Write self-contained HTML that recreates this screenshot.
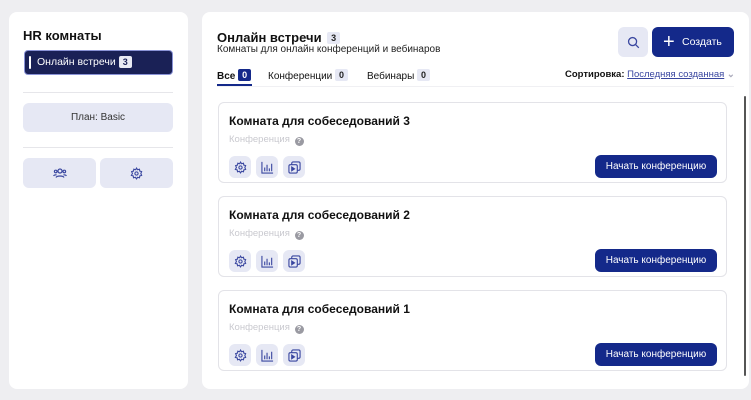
<!DOCTYPE html>
<html><head><meta charset="utf-8"><style>
*{box-sizing:border-box;margin:0;padding:0}
body{width:751px;height:400px;background:#eeeef1;font-family:"Liberation Sans",sans-serif;position:relative;overflow:hidden;color:#111}
.card{position:absolute;background:#fff;border-radius:8px}
.left{left:9px;top:12px;width:179px;height:377px}
.right{left:202px;top:12px;width:547px;height:377px}
.abs{position:absolute}
.sel{left:15px;top:38px;width:149px;height:25px;background:#1a2156;border:1.5px solid #8a93d6;border-radius:4px;color:#fff;font-size:10.5px;line-height:22px;padding-left:12px}
.sel:before{content:"";position:absolute;left:4px;top:5px;width:2px;height:13px;background:#fff;border-radius:1px}
.badgew{display:inline-block;background:#e8e9f3;color:#1a2156;font-size:9px;font-weight:bold;line-height:12px;padding:0 4px;border-radius:2px;margin-left:3px}
.hr{height:1px;background:#e6e6ea}
.lbtn{background:#e6e8f4;border-radius:6px;color:#333;font-size:10px;text-align:center}
.badge{display:inline-block;background:#e6e8f4;color:#222;font-size:9px;font-weight:bold;line-height:12px;padding:0 4px;border-radius:2px;margin-left:3px;vertical-align:1px}
.badged{background:#14298a;color:#fff}
.room{position:absolute;left:16px;width:509px;height:81px;border:1px solid #e3e3e8;border-radius:6px}
.room h3{position:absolute;left:10px;top:11px;font-size:12px;font-weight:bold}
.room .t{position:absolute;left:10px;top:31px;font-size:9.5px;color:#c9c9cf}
.q{display:inline-block;width:9px;height:9px;border-radius:50%;background:#9a9aa2;color:#fff;font-size:7px;line-height:9px;text-align:center;font-weight:bold;vertical-align:-1px;margin-left:2px}
.ib{position:absolute;top:53px;width:22px;height:22px;background:#e6e8f4;border-radius:6px;display:flex;align-items:center;justify-content:center}
.go{position:absolute;right:9px;top:52px;width:122px;height:23px;background:#14298a;border-radius:6px;color:#fff;font-size:10px;text-align:center;line-height:23px}
</style></head><body>
<div class="card left">
 <div class="abs" style="left:14px;top:16px;font-size:13px;font-weight:bold">HR комнаты</div>
 <div class="abs sel" style="left:15px;top:38px">Онлайн встречи<span class="badgew">3</span></div>
 <div class="abs hr" style="left:14px;top:80px;width:150px"></div>
 <div class="abs lbtn" style="left:14px;top:91px;width:150px;height:29px;line-height:29px">План: Basic</div>
 <div class="abs hr" style="left:14px;top:135px;width:150px"></div>
 <div class="abs lbtn" style="left:14px;top:146px;width:73px;height:30px;display:flex;align-items:center;justify-content:center">
  <svg width="14" height="12" viewBox="0 0 14 12" fill="none" stroke="#3a47a0" stroke-width="1.2"><circle cx="7" cy="4" r="2"/><circle cx="2.7" cy="4.5" r="1.3"/><circle cx="11.3" cy="4.5" r="1.3"/><path d="M3 10.5c1-2 7-2 8 0M0.6 9c.5-1 2-1.4 3-1M13.4 9c-.5-1-2-1.4-3-1"/></svg></div>
 <div class="abs lbtn" style="left:91px;top:146px;width:73px;height:30px;display:flex;align-items:center;justify-content:center">
  <svg width="13" height="13" viewBox="0 0 24 24" fill="none" stroke="#3a47a0" stroke-width="2"><circle cx="12" cy="12" r="3"/><path d="M12 2l2 3 3.5-1 .5 3.5 3.5 1-1.5 3.5 1.5 3.5-3.5 1-.5 3.5-3.5-1-2 3-2-3-3.5 1-.5-3.5-3.5-1L4.5 12 3 8.5l3.5-1L7 4l3.5 1z"/></svg></div>
</div>
<div class="card right">
 <div class="abs" style="left:15px;top:18px;font-size:13px;font-weight:bold">Онлайн встречи <span class="badge" style="margin-left:2px">3</span></div>
 <div class="abs" style="left:15px;top:32px;font-size:10px;color:#222">Комнаты для онлайн конференций и вебинаров</div>
 <div class="abs" style="left:416px;top:15px;width:30px;height:30px;background:#e6e8f4;border-radius:6px;display:flex;align-items:center;justify-content:center"><svg width="13" height="13" viewBox="0 0 14 14" fill="none" stroke="#3a47a0" stroke-width="1.4"><circle cx="6" cy="6" r="4.3"/><path d="M9.2 9.2l3.5 3.5"/></svg></div>
 <div class="abs" style="left:450px;top:15px;width:82px;height:30px;background:#14298a;border-radius:6px;color:#fff;font-size:10.5px;line-height:30px;padding-left:30px"><span style="position:absolute;left:11px;top:0;font-size:20px;font-weight:300">+</span>Создать</div>
 <div class="abs" style="left:15px;top:57px;font-size:10px;font-weight:bold">Все <span class="badge badged" style="margin-left:0">0</span></div>
 <div class="abs" style="left:15px;top:72px;width:35px;height:2px;background:#14298a"></div>
 <div class="abs" style="left:66px;top:57px;font-size:10px">Конференции <span class="badge" style="margin-left:0">0</span></div>
 <div class="abs" style="left:165px;top:57px;font-size:10px">Вебинары <span class="badge" style="margin-left:0">0</span></div>
 <div class="abs" style="left:363px;top:57px;font-size:9.5px;font-weight:bold">Сортировка: <span style="font-weight:normal;color:#3a47a0;text-decoration:underline">Последняя созданная</span> <span style="color:#aab">⌄</span></div>
 <div class="abs hr" style="left:15px;top:74px;width:517px;background:#f0f0f3"></div>
 <div class="abs" style="left:0;top:84px;width:547px;height:278px;overflow:hidden">
  <div class="room" style="top:6px"><h3>Комната для собеседований 3</h3><div class="t">Конференция <span class="q">?</span></div>
   <div class="ib" style="left:10px"><svg width="13" height="13" viewBox="0 0 24 24" fill="none" stroke="#3a47a0" stroke-width="2"><circle cx="12" cy="12" r="3"/><path d="M12 2l2 3 3.5-1 .5 3.5 3.5 1-1.5 3.5 1.5 3.5-3.5 1-.5 3.5-3.5-1-2 3-2-3-3.5 1-.5-3.5-3.5-1L4.5 12 3 8.5l3.5-1L7 4l3.5 1z"/></svg></div>
   <div class="ib" style="left:37px"><svg width="13" height="13" viewBox="0 0 14 14" fill="none" stroke="#3a47a0" stroke-width="1.2"><path d="M1 1v12h12M4 11V7M6.5 11V4M9 11V8M11.5 11V3"/></svg></div>
   <div class="ib" style="left:64px"><svg width="13" height="13" viewBox="0 0 14 14" fill="none" stroke="#3a47a0" stroke-width="1.2"><rect x="1" y="4" width="9" height="9" rx="1.5"/><path d="M4 4V2.5A1.5 1.5 0 015.5 1h6A1.5 1.5 0 0113 2.5v6A1.5 1.5 0 0111.5 10H10"/><path d="M4 6.5v4l3-2z" fill="#3a47a0"/></svg></div>
   <div class="go">Начать конференцию</div></div>
  <div class="room" style="top:100px"><h3>Комната для собеседований 2</h3><div class="t">Конференция <span class="q">?</span></div>
   <div class="ib" style="left:10px"><svg width="13" height="13" viewBox="0 0 24 24" fill="none" stroke="#3a47a0" stroke-width="2"><circle cx="12" cy="12" r="3"/><path d="M12 2l2 3 3.5-1 .5 3.5 3.5 1-1.5 3.5 1.5 3.5-3.5 1-.5 3.5-3.5-1-2 3-2-3-3.5 1-.5-3.5-3.5-1L4.5 12 3 8.5l3.5-1L7 4l3.5 1z"/></svg></div>
   <div class="ib" style="left:37px"><svg width="13" height="13" viewBox="0 0 14 14" fill="none" stroke="#3a47a0" stroke-width="1.2"><path d="M1 1v12h12M4 11V7M6.5 11V4M9 11V8M11.5 11V3"/></svg></div>
   <div class="ib" style="left:64px"><svg width="13" height="13" viewBox="0 0 14 14" fill="none" stroke="#3a47a0" stroke-width="1.2"><rect x="1" y="4" width="9" height="9" rx="1.5"/><path d="M4 4V2.5A1.5 1.5 0 015.5 1h6A1.5 1.5 0 0113 2.5v6A1.5 1.5 0 0111.5 10H10"/><path d="M4 6.5v4l3-2z" fill="#3a47a0"/></svg></div>
   <div class="go">Начать конференцию</div></div>
  <div class="room" style="top:194px"><h3>Комната для собеседований 1</h3><div class="t">Конференция <span class="q">?</span></div>
   <div class="ib" style="left:10px"><svg width="13" height="13" viewBox="0 0 24 24" fill="none" stroke="#3a47a0" stroke-width="2"><circle cx="12" cy="12" r="3"/><path d="M12 2l2 3 3.5-1 .5 3.5 3.5 1-1.5 3.5 1.5 3.5-3.5 1-.5 3.5-3.5-1-2 3-2-3-3.5 1-.5-3.5-3.5-1L4.5 12 3 8.5l3.5-1L7 4l3.5 1z"/></svg></div>
   <div class="ib" style="left:37px"><svg width="13" height="13" viewBox="0 0 14 14" fill="none" stroke="#3a47a0" stroke-width="1.2"><path d="M1 1v12h12M4 11V7M6.5 11V4M9 11V8M11.5 11V3"/></svg></div>
   <div class="ib" style="left:64px"><svg width="13" height="13" viewBox="0 0 14 14" fill="none" stroke="#3a47a0" stroke-width="1.2"><rect x="1" y="4" width="9" height="9" rx="1.5"/><path d="M4 4V2.5A1.5 1.5 0 015.5 1h6A1.5 1.5 0 0113 2.5v6A1.5 1.5 0 0111.5 10H10"/><path d="M4 6.5v4l3-2z" fill="#3a47a0"/></svg></div>
   <div class="go">Начать конференцию</div></div>
 </div>
 <div class="abs" style="left:542px;top:84px;width:2px;height:280px;background:#555;border-radius:1px"></div>
</div>
</body></html>
